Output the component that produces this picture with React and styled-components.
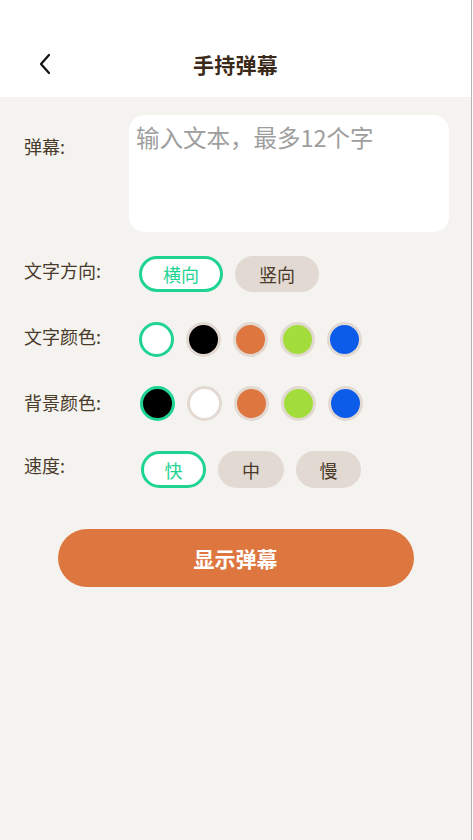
import React, { useState } from "react";
import styled, { createGlobalStyle } from "styled-components";

const GlobalStyle = createGlobalStyle`
  html, body {
    margin: 0;
    padding: 0;
    background: #ffffff;
  }
  body {
    font-family: "Noto Sans CJK SC", "Noto Sans", sans-serif;
  }
`;

const GREEN = "#1fd491";
const BEIGE = "#e3d9d3";
const BROWN = "#4a3a29";

const Page = styled.div`
  width: 471px;
  height: 840px;
  display: flex;
  flex-direction: column;
  background: #f4f3f0;
  border-right: 1px solid #b4b4b4;
  box-sizing: content-box;
`;

const Header = styled.header`
  height: 97px;
  padding-top: 30px;
  box-sizing: border-box;
  background: #ffffff;
  display: grid;
  grid-template-columns: 1fr auto 1fr;
  align-items: center;
`;

const BackButton = styled.button`
  justify-self: start;
  margin-left: 38px;
  width: 14px;
  height: 22px;
  padding: 0;
  border: none;
  background: transparent;
  display: flex;
  align-items: center;
  justify-content: center;
  cursor: pointer;
`;

const Title = styled.h1`
  margin: 0;
  font-size: 21px;
  font-weight: 700;
  color: #3b2a1a;
  letter-spacing: 0.3px;
`;

const Form = styled.div`
  padding: 18px 22px 0 24px;
  display: flex;
  flex-direction: column;
`;

const Row = styled.div`
  display: flex;
  align-items: flex-start;
  margin-top: ${(p) => p.$gap || 0}px;
`;

const Label = styled.div`
  width: 105px;
  flex-shrink: 0;
  font-size: 18px;
  line-height: 28px;
  color: ${BROWN};
  padding-top: ${(p) => p.$offset || 0}px;
`;

const TextBox = styled.textarea`
  flex: 1;
  height: 117px;
  box-sizing: border-box;
  border: none;
  border-radius: 15px;
  background: #ffffff;
  padding: 6px 7px;
  resize: none;
  outline: none;
  font-family: "Noto Sans CJK SC", "Noto Sans", sans-serif;
  font-size: 23.5px;
  line-height: 32px;
  color: #333;

  &::placeholder {
    color: #9e9e9e;
  }
`;

const Options = styled.div`
  display: flex;
  gap: 12px;
  padding-left: ${(p) => p.$indent || 10}px;
`;

const Pill = styled.button`
  width: ${(p) => p.$width}px;
  height: ${(p) => p.$height}px;
  box-sizing: border-box;
  border-radius: 999px;
  border: 3px solid ${(p) => (p.$active ? GREEN : BEIGE)};
  background: ${(p) => (p.$active ? "#ffffff" : BEIGE)};
  color: ${(p) => (p.$active ? GREEN : BROWN)};
  font-family: "Noto Sans CJK SC", "Noto Sans", sans-serif;
  font-size: 18px;
  padding: 0;
  display: flex;
  align-items: center;
  justify-content: center;
  cursor: pointer;
`;

const Swatch = styled.button`
  width: 35px;
  height: 35px;
  box-sizing: border-box;
  border-radius: 50%;
  border: 3px solid ${(p) => (p.$active ? GREEN : BEIGE)};
  background: ${(p) => p.$color};
  padding: 0;
  cursor: pointer;
`;

const Submit = styled.button`
  align-self: center;
  margin-top: 41px;
  margin-left: -2px;
  width: 356px;
  height: 58px;
  border: none;
  border-radius: 29px;
  background: #de7640;
  color: #ffffff;
  font-family: "Noto Sans CJK SC", "Noto Sans", sans-serif;
  font-size: 21px;
  font-weight: 700;
  cursor: pointer;
`;

const COLORS = ["#ffffff", "#000000", "#de7640", "#a3dd3c", "#0d5be9"];
const BG_COLORS = ["#000000", "#ffffff", "#de7640", "#a3dd3c", "#0d5be9"];

const ChevronLeft = () => (
  <svg width="14" height="22" viewBox="0 0 14 22" fill="none">
    <polyline
      points="11,2 3,11 11,20"
      stroke="#111"
      strokeWidth="2.2"
      strokeLinecap="round"
      strokeLinejoin="round"
    />
  </svg>
);

const App = () => {
  const [text, setText] = useState("");
  const [dir, setDir] = useState("h");
  const [color, setColor] = useState(0);
  const [bg, setBg] = useState(0);
  const [speed, setSpeed] = useState("fast");

  return (
    <>
      <GlobalStyle />
      <Page>
        <Header>
          <BackButton aria-label="返回">
            <ChevronLeft />
          </BackButton>
          <Title>手持弹幕</Title>
          <span />
        </Header>
        <Form>
          <Row>
            <Label $offset={17}>弹幕:</Label>
            <TextBox
              value={text}
              maxLength={12}
              placeholder="输入文本，最多12个字"
              onChange={(e) => setText(e.target.value)}
            />
          </Row>
          <Row $gap={24}>
            <Label $offset={0}>文字方向:</Label>
            <Options>
              <Pill $width={84} $height={36} $active={dir === "h"} onClick={() => setDir("h")}>
                横向
              </Pill>
              <Pill $width={84} $height={36} $active={dir === "v"} onClick={() => setDir("v")}>
                竖向
              </Pill>
            </Options>
          </Row>
          <Row $gap={30}>
            <Label $offset={0}>文字颜色:</Label>
            <Options>
              {COLORS.map((c, i) => (
                <Swatch key={c} $color={c} $active={color === i} onClick={() => setColor(i)} />
              ))}
            </Options>
          </Row>
          <Row $gap={29}>
            <Label $offset={2}>背景颜色:</Label>
            <Options $indent={11}>
              {BG_COLORS.map((c, i) => (
                <Swatch key={c} $color={c} $active={bg === i} onClick={() => setBg(i)} />
              ))}
            </Options>
          </Row>
          <Row $gap={30}>
            <Label $offset={-1}>速度:</Label>
            <Options $indent={12}>
              <Pill $width={65} $height={37} $active={speed === "fast"} onClick={() => setSpeed("fast")}>
                快
              </Pill>
              <Pill $width={66} $height={37} $active={speed === "mid"} onClick={() => setSpeed("mid")}>
                中
              </Pill>
              <Pill $width={65} $height={37} $active={speed === "slow"} onClick={() => setSpeed("slow")}>
                慢
              </Pill>
            </Options>
          </Row>
          <Submit>显示弹幕</Submit>
        </Form>
      </Page>
    </>
  );
};

export default App;
